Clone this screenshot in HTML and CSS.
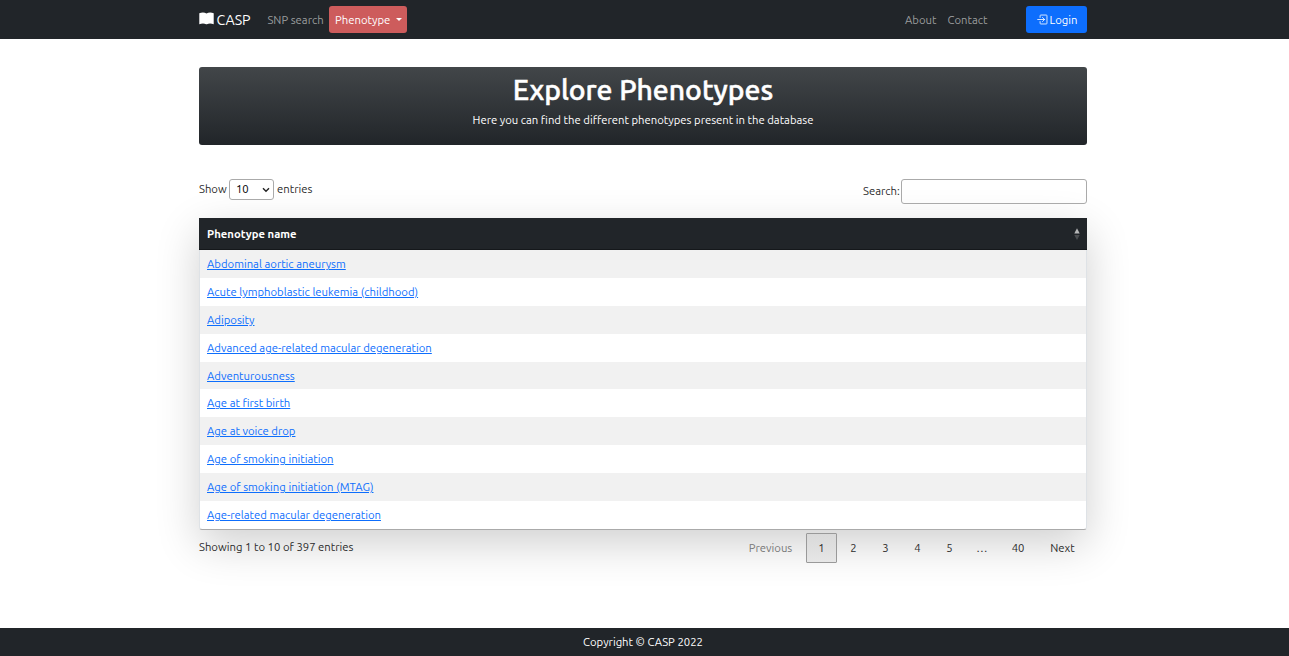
FILE: index.html
```html
<!DOCTYPE html>
<html lang="en">
<head>
<meta charset="utf-8">
<title>CASP - Phenotypes</title>
<link rel="stylesheet" href="styles.css">
</head>
<body>
<header class="navbar">
  <div class="container nav-inner">
    <a class="brand"><svg class="book" viewBox="0 0 15 13"><path fill="currentColor" d="M7.500 1.500C5.500.300 2.500.400.300 1.300V12.300C2.500 11.300 5 11.100 7.100 12.200h.8c2.100-1.100 4.600-.9 6.800.1V1.300C12.500.400 9.500.300 7.500 1.500z"/></svg><span class="brand-name">CASP</span></a>
    <a class="nav-link snp">SNP search</a>
    <a class="dropdown"><span>Phenotype</span><span class="caret"></span></a>
    <nav class="nav-right">
      <a class="nav-link about">About</a>
      <a class="nav-link contact">Contact</a>
      <a class="login"><svg class="login-icon" viewBox="0 0 16 16" fill="none" stroke="currentColor" stroke-width="1.2" stroke-linecap="round" stroke-linejoin="round"><path d="M4.500 5V2.500a1 1 0 0 1 1-1h8a1 1 0 0 1 1 1v11a1 1 0 0 1-1 1h-8a1 1 0 0 1-1-1V11M1 8h10M8 5l3 3-3 3"/></svg><span>Login</span></a>
    </nav>
  </div>
</header>
<main class="container">
  <section class="hero">
    <h1>Explore Phenotypes</h1>
    <p>Here you can find the different phenotypes present in the database</p>
  </section>
  <div class="controls">
    <div class="length"><span class="show">Show</span><span class="select"><span class="value">10</span><svg viewBox="0 0 8 6"><path d="M1 1.300l3 3 3-3" fill="none" stroke="#222" stroke-width="1.400"/></svg></span><span class="entries">entries</span></div>
    <label class="search"><span>Search:</span><input type="text"></label>
  </div>
  <div class="table">
    <div class="thead"><span>Phenotype name</span><svg class="sort" viewBox="0 0 6 12"><path d="M.3 5.500L3 .3l2.700 5.200z" fill="#b5b6b7"/><path d="M.3 7L3 12l2.700-5z" fill="#4b4e51"/></svg></div>
    <div class="row"><a>Abdominal aortic aneurysm</a></div>
    <div class="row"><a>Acute lymphoblastic leukemia (childhood)</a></div>
    <div class="row"><a>Adiposity</a></div>
    <div class="row"><a>Advanced age-related macular degeneration</a></div>
    <div class="row"><a>Adventurousness</a></div>
    <div class="row"><a>Age at first birth</a></div>
    <div class="row"><a>Age at voice drop</a></div>
    <div class="row"><a>Age of smoking initiation</a></div>
    <div class="row"><a>Age of smoking initiation (MTAG)</a></div>
    <div class="row"><a>Age-related macular degeneration</a></div>
  </div>
  <div class="table-foot">
    <span class="info">Showing 1 to 10 of 397 entries</span>
    <div class="pages">
      <a class="page prev">Previous</a><a class="page current">1</a><a class="page">2</a><a class="page">3</a><a class="page">4</a><a class="page">5</a><span class="page dots">…</span><a class="page forty">40</a><a class="page next">Next</a>
    </div>
  </div>
</main>
<footer class="footer"><span>Copyright © CASP 2022</span></footer>
</body>
</html>
```
FILE: styles.css
```css
* { box-sizing: border-box; }
body {
  margin: 0;
  height: 656px;
  display: flex;
  flex-direction: column;
  overflow: hidden;
  background: #fff;
  color: #2b2b2b;
  font: 11.3px/16px Ubuntu, "Noto Sans", sans-serif;
  white-space: nowrap;
}
.container { width: 888px; margin-left: 199px; }
.navbar { height: 39px; background: #212529; flex: none; }
.nav-inner { display: flex; align-items: center; height: 39px; }
.brand { display: flex; align-items: center; width: 68px; color: #fff; }
.book { width: 15px; height: 13px; margin: -2px 2.500px 0 0; }
.brand-name { font-size: 14.17px; letter-spacing: -0.1px; }
.nav-link { color: #9b9d9e; }
.snp { width: 62px; padding-left: 0.400px; }
.dropdown {
  display: flex;
  align-items: center;
  justify-content: space-between;
  width: 78px;
  height: 27px;
  padding: 0 5px 0 6px;
  border-radius: 3px;
  background: #cd5c5c;
  color: #fff;
}
.caret { border: 3px solid transparent; border-top-color: #fff; border-bottom: 0; }
.nav-right { display: flex; align-items: center; margin-left: auto; }
.about { width: 42.500px; }
.contact { width: 78.500px; }
.login {
  display: flex;
  align-items: center;
  width: 61px;
  height: 27px;
  padding-left: 11px;
  border-radius: 3px;
  background: #0d6efd;
  color: #fff;
}
.login-icon { width: 11px; height: 11px; margin-right: 1.500px; }
.hero {
  height: 78px;
  margin-top: 28px;
  padding-top: 6px;
  border-radius: 3px;
  background: linear-gradient(#424649, #212529);
  color: #fff;
  text-align: center;
}
.hero h1 {
  margin: 0;
  font-size: 28.33px;
  line-height: 34px;
  font-weight: 500;
  -webkit-text-stroke: 0.500px #fff;
}
.hero p { margin: 5px 0 0; }
.controls { display: flex; justify-content: space-between; margin-top: 34px; height: 39px; }
.length { display: flex; align-items: center; height: 21px; }
.show, .entries { margin-top: -2px; }
.show { width: 30px; }
.select {
  display: flex;
  align-items: center;
  justify-content: space-between;
  width: 45px;
  height: 21px;
  margin-right: 3px;
  padding: 0 3px 0 6px;
  border: 1px solid #aaa;
  border-radius: 3px;
  background: #fff;
  color: #000;
}
.value { margin-top: -2px; }
.select svg { width: 8px; height: 6px; }
.search { display: flex; align-items: center; height: 25px; }
.search span { width: 38px; margin-top: -2px; }
.search input { width: 186px; height: 25px; border: 1px solid #aaa; border-radius: 3px; background: transparent; }
.table {
  height: 312px;
  border: 1px solid #dee2e6;
  border-top: 0;
  border-bottom-color: #aaa;
  border-radius: 0 0 3px 3px;
  background: #fff;
  box-shadow: 0 14px 44px rgba(0, 0, 0, .19);
}
.thead {
  display: flex;
  align-items: center;
  justify-content: space-between;
  height: 32px;
  margin: 0 -1px;
  padding: 0 7.500px 0 8px;
  background: #212529;
  border-bottom: 1px solid #15181b;
  color: #fff;
  font-weight: 700;
}
.sort { width: 6px; height: 12px; }
.row { height: 27.9px; padding: 6px 7px; }
.row:nth-child(even) { background: #f1f1f1; }
.row a { color: #0d6efd; text-decoration: underline; }
.table-foot { display: flex; justify-content: space-between; padding-top: 3px; }
.info { margin-top: 6px; }
.pages { display: flex; gap: 1px; }
.page { width: 31px; height: 30px; line-height: 30px; text-align: center; }
.prev { width: 58px; margin-right: 6px; padding-left: 1px; color: #777; }
.current {
  line-height: 28px;
  border: 1px solid #999;
  border-radius: 1px;
  background: linear-gradient(#d9d9d9, #e6e6e6);
}
.dots { width: 32px; }
.forty { width: 38px; }
.next { width: 49px; }
.footer {
  height: 28px;
  margin-top: auto;
  flex: none;
  padding-right: 3px;
  background: #212529;
  color: #fff;
  text-align: center;
  line-height: 28px;
}
```
